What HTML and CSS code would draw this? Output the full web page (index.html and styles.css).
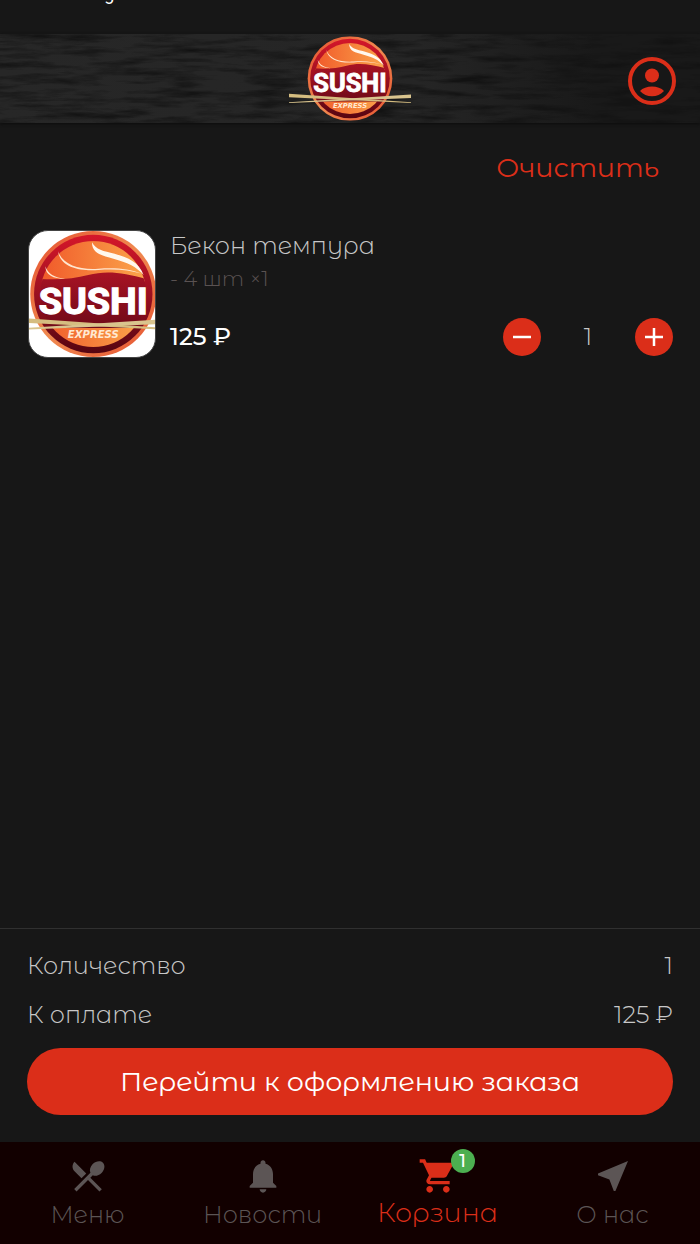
FILE: index.html
```html
<!DOCTYPE html>
<html lang="ru">
<head>
    <meta charset="UTF-8">
    <meta name="viewport" content="width=device-width, initial-scale=1.0">
    <title>Корзина</title>
    <link rel="stylesheet" href="styles.css">
</head>
<body>

<!-- Общие рисунки -->
<svg class="sprite" aria-hidden="true">
    <defs>
        <linearGradient id="rim" x1="0" y1="0" x2="0" y2="1">
            <stop offset="0" stop-color="#d5172a"/>
            <stop offset="0.5" stop-color="#9b1020"/>
            <stop offset="1" stop-color="#560511"/>
        </linearGradient>
        <linearGradient id="band" x1="0" y1="0" x2="0" y2="1">
            <stop offset="0" stop-color="#a81324"/>
            <stop offset="1" stop-color="#6e0918"/>
        </linearGradient>
        <linearGradient id="fish" x1="0" y1="0" x2="1" y2="0">
            <stop offset="0" stop-color="#f0592a"/>
            <stop offset="1" stop-color="#fba64b"/>
        </linearGradient>
        <linearGradient id="edge" x1="0" y1="0" x2="1" y2="1">
            <stop offset="0" stop-color="#e5502f"/>
            <stop offset="0.5" stop-color="#f08a50"/>
            <stop offset="1" stop-color="#e5502f"/>
        </linearGradient>
        <clipPath id="inner"><circle cx="72" cy="50" r="42"/></clipPath>
        <symbol id="logo" viewBox="0 0 144 100">
            <circle cx="72" cy="50" r="50" fill="url(#edge)"/>
            <circle cx="72" cy="50" r="47" fill="url(#rim)"/>
            <g clip-path="url(#inner)">
                <rect x="30" y="8" width="84" height="32" fill="url(#fish)"/>
                <path d="M30 38c14 1 27 0 38-3 14-4 28-2 46 3v40H30z" fill="url(#band)"/>
                <path d="M30 77h84v18H30z" fill="url(#fish)"/>
            </g>
            <path d="M71 9c0 9 7 10 17 13 11 3 18 6 24 13-4-11-13-14-23-17-9-2-15-3-18-9z" fill="#fff8ee"/>
            <path d="M44 16c2 13 17 16 32 15 14-1 24 0 35 3-11-4-21-5-35-4-15 1-28-3-32-14z" fill="#ffe6cf"/>
            <path d="M34 28c0 7 6 10 16 10-9-1-14-4-16-10z" fill="#ffe6cf"/>
            <text class="logo-word" x="72" y="66" text-anchor="middle">SUSHI</text>
            <path d="M0 68l144 10v1L0 72z" fill="#d5bd80"/>
            <path d="M144 69L0 78v1l144-6z" fill="#d9c48e"/>
            <text class="logo-sub" x="72" y="85" text-anchor="middle">EXPRESS</text>
        </symbol>
    </defs>
</svg>

<div class="app">
    <div class="status"><span>Screenshots generation</span></div>

    <header class="header">
        <svg class="wood" preserveAspectRatio="none" aria-hidden="true">
            <filter id="grain" x="0" y="0" width="100%" height="100%" color-interpolation-filters="sRGB">
                <feTurbulence type="fractalNoise" baseFrequency="0.02 0.14" numOctaves="5" seed="8"/>
                <feColorMatrix values="0 0 0 0 0.07  0 0 0 0 0.07  0 0 0 0 0.07  2.2 0 0 0 -0.9"/>
            </filter>
            <rect width="100%" height="100%" filter="url(#grain)"/>
        </svg>
        <svg class="header-logo" viewBox="0 0 144 100" role="img" aria-label="Sushi Express"><use href="#logo"/></svg>
        <button class="profile" aria-label="Профиль">
            <svg viewBox="0 0 48 48">
                <circle cx="24" cy="24" r="22" fill="#171717" stroke="currentColor" stroke-width="4"/>
                <circle cx="24" cy="18.500" r="7" fill="currentColor"/>
                <path d="M12 34c5-6 19-6 24 0-6 7-18 7-24 0z" fill="currentColor"/>
            </svg>
        </button>
    </header>

    <main class="cart">
        <button class="clear">Очистить</button>

        <div class="item">
            <div class="thumb">
                <svg viewBox="21 0 100 100" preserveAspectRatio="xMidYMid slice" role="img" aria-label="Бекон темпура"><use href="#logo" width="144" height="100"/></svg>
            </div>
            <div class="info">
                <h2 class="name">Бекон темпура</h2>
                <p class="options">- 4 шт ×1</p>
                <div class="bottom">
                    <span class="price">125 ₽</span>
                    <div class="counter">
                        <button class="round" aria-label="Убрать"><svg viewBox="0 0 18 18"><path d="M0 9h18" stroke="#fff" stroke-width="2.500"/></svg></button>
                        <span>1</span>
                        <button class="round" aria-label="Добавить"><svg viewBox="0 0 18 18"><path d="M0 9h18M9 0v18" stroke="#fff" stroke-width="2.500"/></svg></button>
                    </div>
                </div>
            </div>
        </div>
    </main>

    <section class="total">
        <div class="row"><span>Количество</span><span>1</span></div>
        <div class="row"><span>К оплате</span><span>125 ₽</span></div>
        <button class="order">Перейти к оформлению заказа</button>
    </section>

    <nav class="tabs">
        <a class="tab" href="#menu">
            <svg class="icon" viewBox="0 0 24 24"><path d="M8.1 13.34l2.83-2.83L3.91 3.5c-1.56 1.56-1.56 4.09 0 5.66l4.19 4.18zm6.78-1.81c1.53.71 3.68.21 5.27-1.38 1.91-1.91 2.28-4.65.81-6.12-1.46-1.46-4.2-1.1-6.12.81-1.59 1.59-2.09 3.74-1.38 5.27L3.7 19.87l1.41 1.41L12 14.41l6.88 6.88 1.41-1.41L13.41 13l1.47-1.47z"/></svg>
            <span>Меню</span>
        </a>
        <a class="tab" href="#news">
            <svg class="icon" viewBox="0 0 24 24"><path d="M12 22c1.1 0 2-.9 2-2h-4c0 1.1.89 2 2 2zm6-6v-5c0-3.07-1.64-5.64-4.5-6.32V4c0-.83-.67-1.5-1.5-1.5s-1.5.67-1.5 1.5v.68C7.63 5.36 6 7.92 6 11v5l-2 2v1h16v-1l-2-2z"/></svg>
            <span>Новости</span>
        </a>
        <a class="tab active" href="#cart">
            <span class="icon-wrap">
                <svg class="icon" viewBox="0 0 24 24"><path d="M7 18c-1.1 0-1.99.9-1.99 2S5.9 22 7 22s2-.9 2-2-.9-2-2-2zM1 2v2h2l3.6 7.59-1.35 2.45c-.16.28-.25.61-.25.96 0 1.1.9 2 2 2h12v-2H7.42c-.14 0-.25-.11-.25-.25l.03-.12.9-1.63h7.45c.75 0 1.41-.41 1.75-1.03l3.58-6.49c.08-.14.12-.31.12-.48 0-.55-.45-1-1-1H5.21l-.94-2H1zm16 16c-1.1 0-1.99.9-1.99 2s.89 2 1.99 2 2-.9 2-2-.9-2-2-2z"/></svg>
                <span class="badge">1</span>
            </span>
            <span>Корзина</span>
        </a>
        <a class="tab" href="#about">
            <svg class="icon" viewBox="0 0 24 24"><path d="M21 3L3 10.53v.98l6.84 2.65L12.48 21h.98L21 3z"/></svg>
            <span>О нас</span>
        </a>
    </nav>
</div>

</body>
</html>
```
FILE: styles.css
```css
* {
    box-sizing: border-box;
}

body {
    margin: 0;
    background-color: #171717;
    color: #c8c8c8;
    font-family: "Montserrat Alternates", Montserrat, Inter, "Noto Sans", sans-serif;
    font-weight: 300;
    font-size: 24px;
    line-height: 32px;
}

button {
    border: none;
    padding: 0;
    background: none;
    font: inherit;
    cursor: pointer;
}

svg {
    display: block;
}

.sprite {
    position: absolute;
    width: 0;
    height: 0;
}

.logo-word {
    font-family: Roboto, sans-serif;
    font-size: 30px;
    font-weight: bold;
    fill: #fff;
    stroke: #fff;
    stroke-width: 1px;
}

.logo-sub {
    font-family: "DejaVu Sans", sans-serif;
    font-size: 8px;
    font-weight: bold;
    font-style: italic;
    fill: #ffe9d2;
}

.app {
    display: flex;
    flex-direction: column;
    min-height: 100vh;
}

/* Верхняя строка, текст обрезан краем экрана */
.status {
    display: flex;
    align-items: flex-start;
    height: 34px;
    overflow: hidden;
    color: #fff;
    font-family: Roboto, sans-serif;
    font-size: 18px;
    font-weight: 400;
    line-height: 18px;
}

.status span {
    margin-top: -15px;
}

.header {
    position: relative;
    display: grid;
    grid-template-columns: 1fr auto 1fr;
    align-items: center;
    height: 89px;
    padding: 0 24px;
    background: linear-gradient(90deg, #272727, #252525 60%, #191919 85%);
    box-shadow: 0 1px 3px #0c0c0c;
}

.wood {
    position: absolute;
    inset: 0;
    width: 100%;
    height: 100%;
}

.header-logo {
    position: relative;
    grid-column: 2;
    width: 122px;
    height: 85px;
}

.profile {
    position: relative;
    justify-self: end;
    width: 48px;
    margin-top: 5px;
    color: #db2e19;
}

.cart {
    flex: 1;
    display: flex;
    flex-direction: column;
    padding: 29px 27px 28px 28px;
}

.clear {
    align-self: flex-end;
    margin: 0 14px 46px 0;
    color: #db2e19;
    font-size: 27px;
    font-weight: 400;
}

.item {
    display: flex;
    gap: 14px;
}

.thumb {
    width: 128px;
    height: 128px;
    overflow: hidden;
    border: 1px solid #444;
    border-radius: 20px;
    background-color: #fff;
}

.thumb svg {
    width: 100%;
    height: 100%;
}

.info {
    flex: 1;
    display: flex;
    flex-direction: column;
}

.name {
    margin: 0;
    font-size: 24px;
    font-weight: 300;
}

.options {
    margin: 1px 0 0;
    color: #5a5252;
    font-size: 21px;
}

.bottom {
    display: flex;
    justify-content: space-between;
    align-items: center;
    margin: auto 0 2px;
}

.price {
    color: #fff;
    font-weight: 500;
}

.counter {
    display: flex;
    justify-content: space-between;
    align-items: center;
    width: 170px;
}

.round {
    display: flex;
    justify-content: center;
    align-items: center;
    width: 38px;
    height: 38px;
    border-radius: 50%;
    background-color: #db2e19;
}

.round svg {
    width: 18px;
    height: 18px;
}

.total {
    display: flex;
    flex-direction: column;
    gap: 17px;
    padding: 21px 27px 27px;
    border-top: 1px solid #303030;
}

.row {
    display: flex;
    justify-content: space-between;
}

.order {
    height: 67px;
    border-radius: 34px;
    background-color: #db2e19;
    color: #fff;
    font-size: 27px;
    font-weight: 400;
}

.tabs {
    display: grid;
    grid-template-columns: repeat(4, 1fr);
    height: 102px;
    padding-top: 14px;
    background-color: #120000;
}

.tab {
    display: flex;
    flex-direction: column;
    align-items: center;
    gap: 3px;
    color: #5c5555;
    text-decoration: none;
}

.active {
    gap: 1px;
    color: #db2e19;
    font-size: 27px;
}

.icon {
    width: 40px;
    height: 40px;
    fill: currentColor;
}

.icon-wrap {
    position: relative;
}

.badge {
    position: absolute;
    top: -7px;
    right: -17px;
    width: 24px;
    height: 24px;
    border-radius: 50%;
    background-color: #4caf50;
    color: #fff;
    font-size: 18px;
    font-weight: 500;
    line-height: 24px;
    text-align: center;
}
```
